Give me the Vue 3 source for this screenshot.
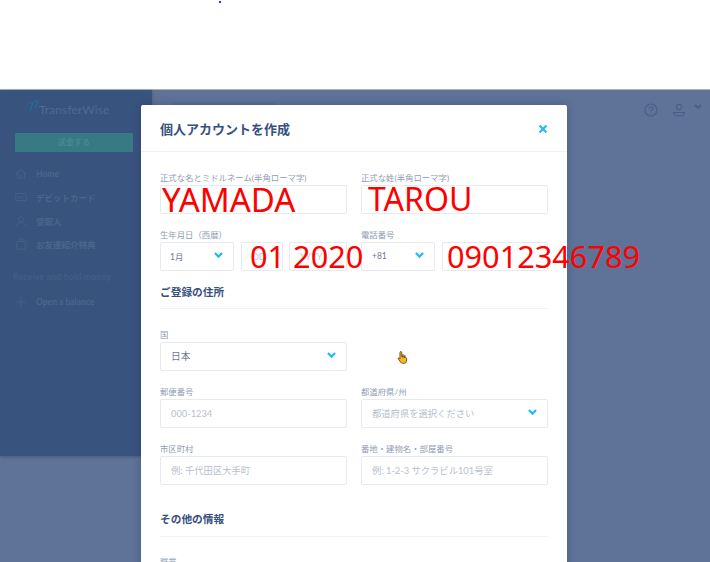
<script setup>
const navItems = [
  { label: 'Home', icon: 'home' },
  { label: 'デビットカード', icon: 'card' },
  { label: '受取人', icon: 'user' },
  { label: 'お友達紹介特典', icon: 'bag' },
]
</script>

<template>
  <div class="page">
    <div class="top-blank">
      <span class="dot"></span>
    </div>
    <div class="stage">
      <aside class="sidebar">
        <div class="logo">
          <svg class="logo-mark" viewBox="0 0 11 12" width="11" height="12">
            <path d="M1 3h4L2 11M5 1h5L7 8" fill="none" stroke="#1f6f9a" stroke-width="1.200" />
          </svg>
          <span class="logo-text">TransferWise</span>
        </div>
        <div class="send">送金する</div>
        <nav class="nav">
          <div v-for="item in navItems" :key="item.label" class="nav-item">
            <svg class="nav-icon" viewBox="0 0 14 14" width="12" height="12" fill="none" stroke="#4a6188" stroke-width="1">
              <path v-if="item.icon === 'home'" d="M1 7l6-5 6 5M3 6v6h3V9h2v3h3V6" />
              <path v-else-if="item.icon === 'card'" d="M1 3h12v8H1zM3 9l3-2 2 1 2-2" />
              <path v-else-if="item.icon === 'user'" d="M7 2a3 3 0 1 1 0 6a3 3 0 1 1 0-6M1 13c1-3 3-4 6-4s5 1 6 4" />
              <path v-else d="M2 4h10v9H2zM5 4V1h4v3" />
            </svg>
            <span>{{ item.label }}</span>
          </div>
        </nav>
        <div class="nav-heading">Receive and hold money</div>
        <div class="nav-item open">
          <svg class="nav-icon" viewBox="0 0 14 14" width="12" height="12" fill="none" stroke="#4a6188" stroke-width="1">
            <path d="M7 1v12M1 7h12" />
          </svg>
          <span>Open a balance</span>
        </div>
      </aside>

      <div class="behind-title"></div>

      <div class="head-icons">
        <svg viewBox="0 0 14 14" width="14" height="14" fill="none" stroke="#47608a" stroke-width="1.100">
          <circle cx="7" cy="7" r="6" />
          <path d="M5.200 5.400a1.800 1.800 0 1 1 2.600 1.700c-.6.3-.8.7-.8 1.300M7 10v.9" />
        </svg>
        <svg class="head-user" viewBox="0 0 14 14" width="14" height="14" fill="none" stroke="#47608a" stroke-width="1.100">
          <circle cx="7" cy="4" r="2.600" />
          <path d="M1.500 9.500h11c0 2.200-2 3.400-5.500 3.400S1.500 11.700 1.500 9.500z" />
        </svg>
        <svg class="head-chev" viewBox="0 0 8 6" width="8" height="6" fill="none" stroke="#47608a" stroke-width="1.800">
          <path d="M1 1l3 3 3-3" />
        </svg>
      </div>

      <section class="modal">
        <header class="modal-head">
          <h1>個人アカウントを作成</h1>
          <svg class="close" viewBox="0 0 10 10" width="10" height="10" fill="none" stroke="#25b8f5" stroke-width="2.200">
            <path d="M1.500 1.500l7 7M8.500 1.500l-7 7" />
          </svg>
        </header>

        <div class="modal-body">
          <div class="grid">
            <div class="field">
              <label>正式な名とミドルネーム(半角ローマ字)</label>
              <div class="box name-box"><span class="red name">YAMADA</span></div>
            </div>
            <div class="field">
              <label>正式な姓(半角ローマ字)</label>
              <div class="box name-box last"><span class="red name surname">TAROU</span></div>
            </div>
          </div>

          <div class="grid row">
            <div class="field">
              <label>生年月日（西暦）</label>
              <div class="dob">
                <div class="box select month">
                  <span class="val small">1月</span>
                  <svg class="chev" viewBox="0 0 10 7" width="9" height="6.500"><path d="M1 1l4 4 4-4" /></svg>
                </div>
                <div class="box dd"><span class="ph">DD</span></div>
                <div class="box yy"><span class="ph">YYYY</span></div>
                <div class="overlay-date red">01 2020</div>
              </div>
            </div>
            <div class="field">
              <label>電話番号</label>
              <div class="phone">
                <div class="box select code">
                  <span class="val small">+81</span>
                  <svg class="chev" viewBox="0 0 10 7" width="9" height="6.500"><path d="M1 1l4 4 4-4" /></svg>
                </div>
                <div class="box tel"></div>
                <div class="overlay-tel red">09012346789</div>
              </div>
            </div>
          </div>

          <h2 class="section first">ご登録の住所</h2>

          <div class="grid country-row">
            <div class="field">
              <label>国</label>
              <div class="box select">
                <span class="val">日本</span>
                <svg class="chev" viewBox="0 0 10 7" width="9" height="6.500"><path d="M1 1l4 4 4-4" /></svg>
              </div>
            </div>
            <div class="cursor-cell">
              <svg class="cursor" viewBox="0 0 12 16" width="11" height="15">
                <path d="M4 1.500c.8 0 1.200.5 1.200 1.200V7l4 .8c1 .2 1.500 1 1.400 2l-.4 2.700c-.2 1-1 1.800-2 1.800H6c-.9 0-1.500-.4-2-1.200L1.300 9.500c-.5-.8.600-1.600 1.300-.9l.6.7V2.700c0-.7.200-1.200.8-1.200z" fill="#f7b71d" stroke="#4a2c0c" stroke-width=".8" />
                <path d="M6.500 4.500v3M8.500 5.500v2.500" stroke="#4a2c0c" stroke-width="1.200" fill="none" />
              </svg>
            </div>
          </div>

          <div class="grid row">
            <div class="field">
              <label>郵便番号</label>
              <div class="box"><span class="ph-lg">000-1234</span></div>
            </div>
            <div class="field">
              <label>都道府県/州</label>
              <div class="box select">
                <span class="ph-lg">都道府県を選択ください</span>
                <svg class="chev" viewBox="0 0 10 7" width="9" height="6.500"><path d="M1 1l4 4 4-4" /></svg>
              </div>
            </div>
          </div>

          <div class="grid row">
            <div class="field">
              <label>市区町村</label>
              <div class="box"><span class="ph-lg">例: 千代田区大手町</span></div>
            </div>
            <div class="field">
              <label>番地・建物名・部屋番号</label>
              <div class="box"><span class="ph-lg">例: 1-2-3 サクラビル101号室</span></div>
            </div>
          </div>

          <h2 class="section second">その他の情報</h2>
          <label class="last-label">職業</label>
        </div>
      </section>
    </div>
  </div>
</template>

<style scoped>
.page {
  width: 710px;
  height: 562px;
  overflow: hidden;
  display: flex;
  flex-direction: column;
  font-family: Lato, "Noto Sans CJK JP", sans-serif;
  background: #fff;
}
.top-blank {
  height: 89px;
  flex: none;
  position: relative;
  background: #fff;
}
.dot {
  position: absolute;
  left: 219px;
  top: 1px;
  width: 2px;
  height: 2px;
  background: #3a3af0;
  box-shadow: 0 0 1px #8a8af5;
}
.stage {
  position: relative;
  flex: 1;
  min-height: 0;
  background: #5f7298;
  border-top: 1px solid #a9b4c6;
}
.sidebar {
  position: absolute;
  left: 0;
  top: 0;
  width: 152px;
  height: 366px;
  background: #39537f;
  padding: 0 19px 0 15px;
  box-sizing: border-box;
  box-shadow: 0 1px 3px rgba(30, 45, 75, .35);
}
.logo {
  display: flex;
  align-items: center;
  height: 38px;
  padding-left: 13px;
  color: #4d6a93;
  font-size: 12px;
  letter-spacing: .1px;
}
.logo-mark { margin-bottom: 6px; flex: none; }
.send {
  margin-top: 5px;
  height: 19px;
  line-height: 19px;
  background: #387a83;
  color: #4d9097;
  font-size: 8px;
  text-align: center;
}
.nav { margin-top: 10px; }
.nav-item {
  display: flex;
  align-items: center;
  height: 23.500px;
  gap: 9px;
  color: #4c658c;
  font-size: 8.500px;
  font-weight: 700;
}
.nav-icon { flex: none; }
.nav-heading {
  margin: 14px 0 0 -2px;
  height: 14px;
  line-height: 14px;
  color: #486088;
  font-size: 8.700px;
  letter-spacing: .25px;
  white-space: nowrap;
}
.open { margin-top: 6px; }
.behind-title {
  position: absolute;
  left: 171px;
  top: 12px;
  width: 104px;
  height: 3px;
  background: #5a6e93;
}
.head-icons {
  position: absolute;
  right: 8px;
  top: 13px;
  display: flex;
  align-items: center;
  gap: 14px;
}
.head-user { margin-right: -6px; }
.head-chev { margin-bottom: 6px; }
.modal {
  position: absolute;
  left: 141px;
  top: 15px;
  width: 426px;
  height: 520px;
  background: #fff;
  border-radius: 2px;
  box-shadow: 0 0 8px rgba(30, 45, 75, .3);
}
.modal-head {
  height: 47px;
  box-sizing: border-box;
  padding: 0 19px;
  display: flex;
  justify-content: space-between;
  align-items: center;
  border-bottom: 1px solid #eef0f3;
}
h1 {
  margin: 0;
  font-size: 13px;
  font-weight: 700;
  color: #37517e;
}
.close { margin-top: 1px; }
.modal-body { padding: 19px 19px 0; }
.grid {
  display: grid;
  grid-template-columns: 187px 187px;
  column-gap: 14px;
}
.row { margin-top: 14.500px; }
.field { display: flex; flex-direction: column; min-width: 0; }
label {
  height: 14px;
  line-height: 14px;
  font-size: 8.400px;
  color: #8f9cb3;
  white-space: nowrap;
}
.box {
  position: relative;
  height: 28.500px;
  box-sizing: border-box;
  border: 1px solid #e7eaee;
  border-radius: 2px;
  background: #fff;
  display: flex;
  align-items: center;
  padding: 0 10px;
}
.name-box { padding: 0 1px; }
.name-box.last { padding-left: 6px; }
.red {
  color: #ff0000;
  font-family: "Noto Sans", sans-serif;
  font-size: 30.700px;
  line-height: 1;
  white-space: nowrap;
}
.red.name { font-size: 33px; }
.red.surname { font-size: 32px; }
.dob, .phone { position: relative; display: flex; }
.month { width: 74px; flex: none; padding: 0 11px 0 9px; }
.dd { width: 42px; flex: none; margin-left: 7px; }
.yy { width: 58px; flex: none; margin-left: 6px; }
.code { width: 74px; flex: none; padding: 0 11px 0 10px; }
.tel { width: 106px; flex: none; margin-left: 7px; }
.select { justify-content: space-between; padding-right: 10px; }
.chev {
  fill: none;
  stroke: #25b8f5;
  stroke-width: 2.400;
  flex: none;
  margin-bottom: 2px;
}
.val { color: #6a7a96; font-size: 9.700px; }
.val.small { font-size: 8.500px; }
.ph { color: #c3cad6; font-size: 9px; }
.ph-lg { color: #b8c0cd; font-size: 9.300px; white-space: nowrap; }
.overlay-date, .overlay-tel {
  position: absolute;
  top: -1px;
  z-index: 2;
}
.overlay-date { left: 90px; }
.overlay-tel { left: 86px; }
.section {
  margin: 0;
  font-size: 10.700px;
  font-weight: 700;
  line-height: 16px;
  color: #37517e;
  border-bottom: 1px solid #f1f3f5;
}
.section.first { margin-top: 13px; height: 24px; }
.country-row { margin-top: 19.500px; }
.cursor-cell { position: relative; }
.cursor { position: absolute; left: 36px; top: 22px; }
.section.second { margin-top: 26.500px; height: 25px; }
.last-label { display: block; margin-top: 18px; }
</style>
